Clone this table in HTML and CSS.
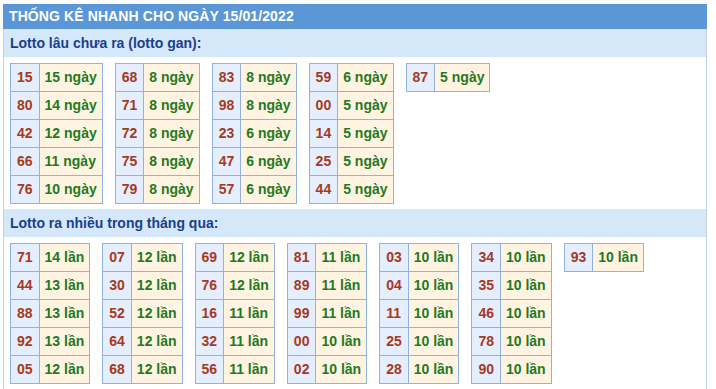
FILE: index.html
```html
<!DOCTYPE html>
<html lang="vi">
<head>
<meta charset="utf-8">
<title>Thống kê nhanh</title>
<link rel="stylesheet" href="styles.css">
</head>
<body>
<div class="box">
  <div class="title">THỐNG KÊ NHANH CHO NGÀY 15/01/2022</div>
  <div class="sub">Lotto lâu chưa ra (lotto gan):</div>
  <div class="tables">
    <table><tr><td class="n">15</td><td class="v">15 ngày</td></tr><tr><td class="n">80</td><td class="v">14 ngày</td></tr><tr><td class="n">42</td><td class="v">12 ngày</td></tr><tr><td class="n">66</td><td class="v">11 ngày</td></tr><tr><td class="n">76</td><td class="v">10 ngày</td></tr></table>
    <table><tr><td class="n">68</td><td class="v">8 ngày</td></tr><tr><td class="n">71</td><td class="v">8 ngày</td></tr><tr><td class="n">72</td><td class="v">8 ngày</td></tr><tr><td class="n">75</td><td class="v">8 ngày</td></tr><tr><td class="n">79</td><td class="v">8 ngày</td></tr></table>
    <table><tr><td class="n">83</td><td class="v">8 ngày</td></tr><tr><td class="n">98</td><td class="v">8 ngày</td></tr><tr><td class="n">23</td><td class="v">6 ngày</td></tr><tr><td class="n">47</td><td class="v">6 ngày</td></tr><tr><td class="n">57</td><td class="v">6 ngày</td></tr></table>
    <table><tr><td class="n">59</td><td class="v">6 ngày</td></tr><tr><td class="n">00</td><td class="v">5 ngày</td></tr><tr><td class="n">14</td><td class="v">5 ngày</td></tr><tr><td class="n">25</td><td class="v">5 ngày</td></tr><tr><td class="n">44</td><td class="v">5 ngày</td></tr></table>
    <table><tr><td class="n">87</td><td class="v">5 ngày</td></tr></table>
  </div>
  <div class="sub">Lotto ra nhiều trong tháng qua:</div>
  <div class="tables">
    <table><tr><td class="n">71</td><td class="v">14 lần</td></tr><tr><td class="n">44</td><td class="v">13 lần</td></tr><tr><td class="n">88</td><td class="v">13 lần</td></tr><tr><td class="n">92</td><td class="v">13 lần</td></tr><tr><td class="n">05</td><td class="v">12 lần</td></tr></table>
    <table><tr><td class="n">07</td><td class="v">12 lần</td></tr><tr><td class="n">30</td><td class="v">12 lần</td></tr><tr><td class="n">52</td><td class="v">12 lần</td></tr><tr><td class="n">64</td><td class="v">12 lần</td></tr><tr><td class="n">68</td><td class="v">12 lần</td></tr></table>
    <table><tr><td class="n">69</td><td class="v">12 lần</td></tr><tr><td class="n">76</td><td class="v">12 lần</td></tr><tr><td class="n">16</td><td class="v">11 lần</td></tr><tr><td class="n">32</td><td class="v">11 lần</td></tr><tr><td class="n">56</td><td class="v">11 lần</td></tr></table>
    <table><tr><td class="n">81</td><td class="v">11 lần</td></tr><tr><td class="n">89</td><td class="v">11 lần</td></tr><tr><td class="n">99</td><td class="v">11 lần</td></tr><tr><td class="n">00</td><td class="v">10 lần</td></tr><tr><td class="n">02</td><td class="v">10 lần</td></tr></table>
    <table><tr><td class="n">03</td><td class="v">10 lần</td></tr><tr><td class="n">04</td><td class="v">10 lần</td></tr><tr><td class="n">11</td><td class="v">10 lần</td></tr><tr><td class="n">25</td><td class="v">10 lần</td></tr><tr><td class="n">28</td><td class="v">10 lần</td></tr></table>
    <table><tr><td class="n">34</td><td class="v">10 lần</td></tr><tr><td class="n">35</td><td class="v">10 lần</td></tr><tr><td class="n">46</td><td class="v">10 lần</td></tr><tr><td class="n">78</td><td class="v">10 lần</td></tr><tr><td class="n">90</td><td class="v">10 lần</td></tr></table>
    <table><tr><td class="n">93</td><td class="v">10 lần</td></tr></table>
  </div>
</div>
</body>
</html>
```
FILE: styles.css
```css
html, body {
  margin: 0;
  padding: 0;
  background: #ffffff;
}
body {
  padding: 4px 0 0 3px;
  font-family: "Liberation Sans", Arial, sans-serif;
}
.box {
  width: 702px;
  border-left: 1px solid #c6d3e6;
  border-right: 1px solid #c6d3e6;
  padding-bottom: 2px;
}
.title {
  background: #5b97d6;
  color: #ffffff;
  font-weight: bold;
  font-size: 14px;
  letter-spacing: 0.1px;
  height: 25px;
  line-height: 25px;
  padding-left: 6px;
  margin: 0 -1px;
}
.sub {
  background: #d5e8fa;
  color: #1b3f8d;
  font-weight: bold;
  font-size: 14px;
  height: 28px;
  line-height: 28px;
  padding-left: 6px;
}
.tables {
  display: flex;
  flex-wrap: wrap;
  align-items: flex-start;
  gap: 12px;
  padding: 6px 6px 5px 6px;
}
table {
  border-collapse: collapse;
}
td {
  border: 1px solid #8fb2e2;
  font-size: 14px;
  font-weight: bold;
  line-height: 27px;
  white-space: nowrap;
}
td.n {
  background: #e5eefc;
  color: #a63a1f;
  padding: 0 6px;
}
td.v {
  background: #fff4e2;
  color: #1f7a1f;
  padding: 0 5px;
}
```
